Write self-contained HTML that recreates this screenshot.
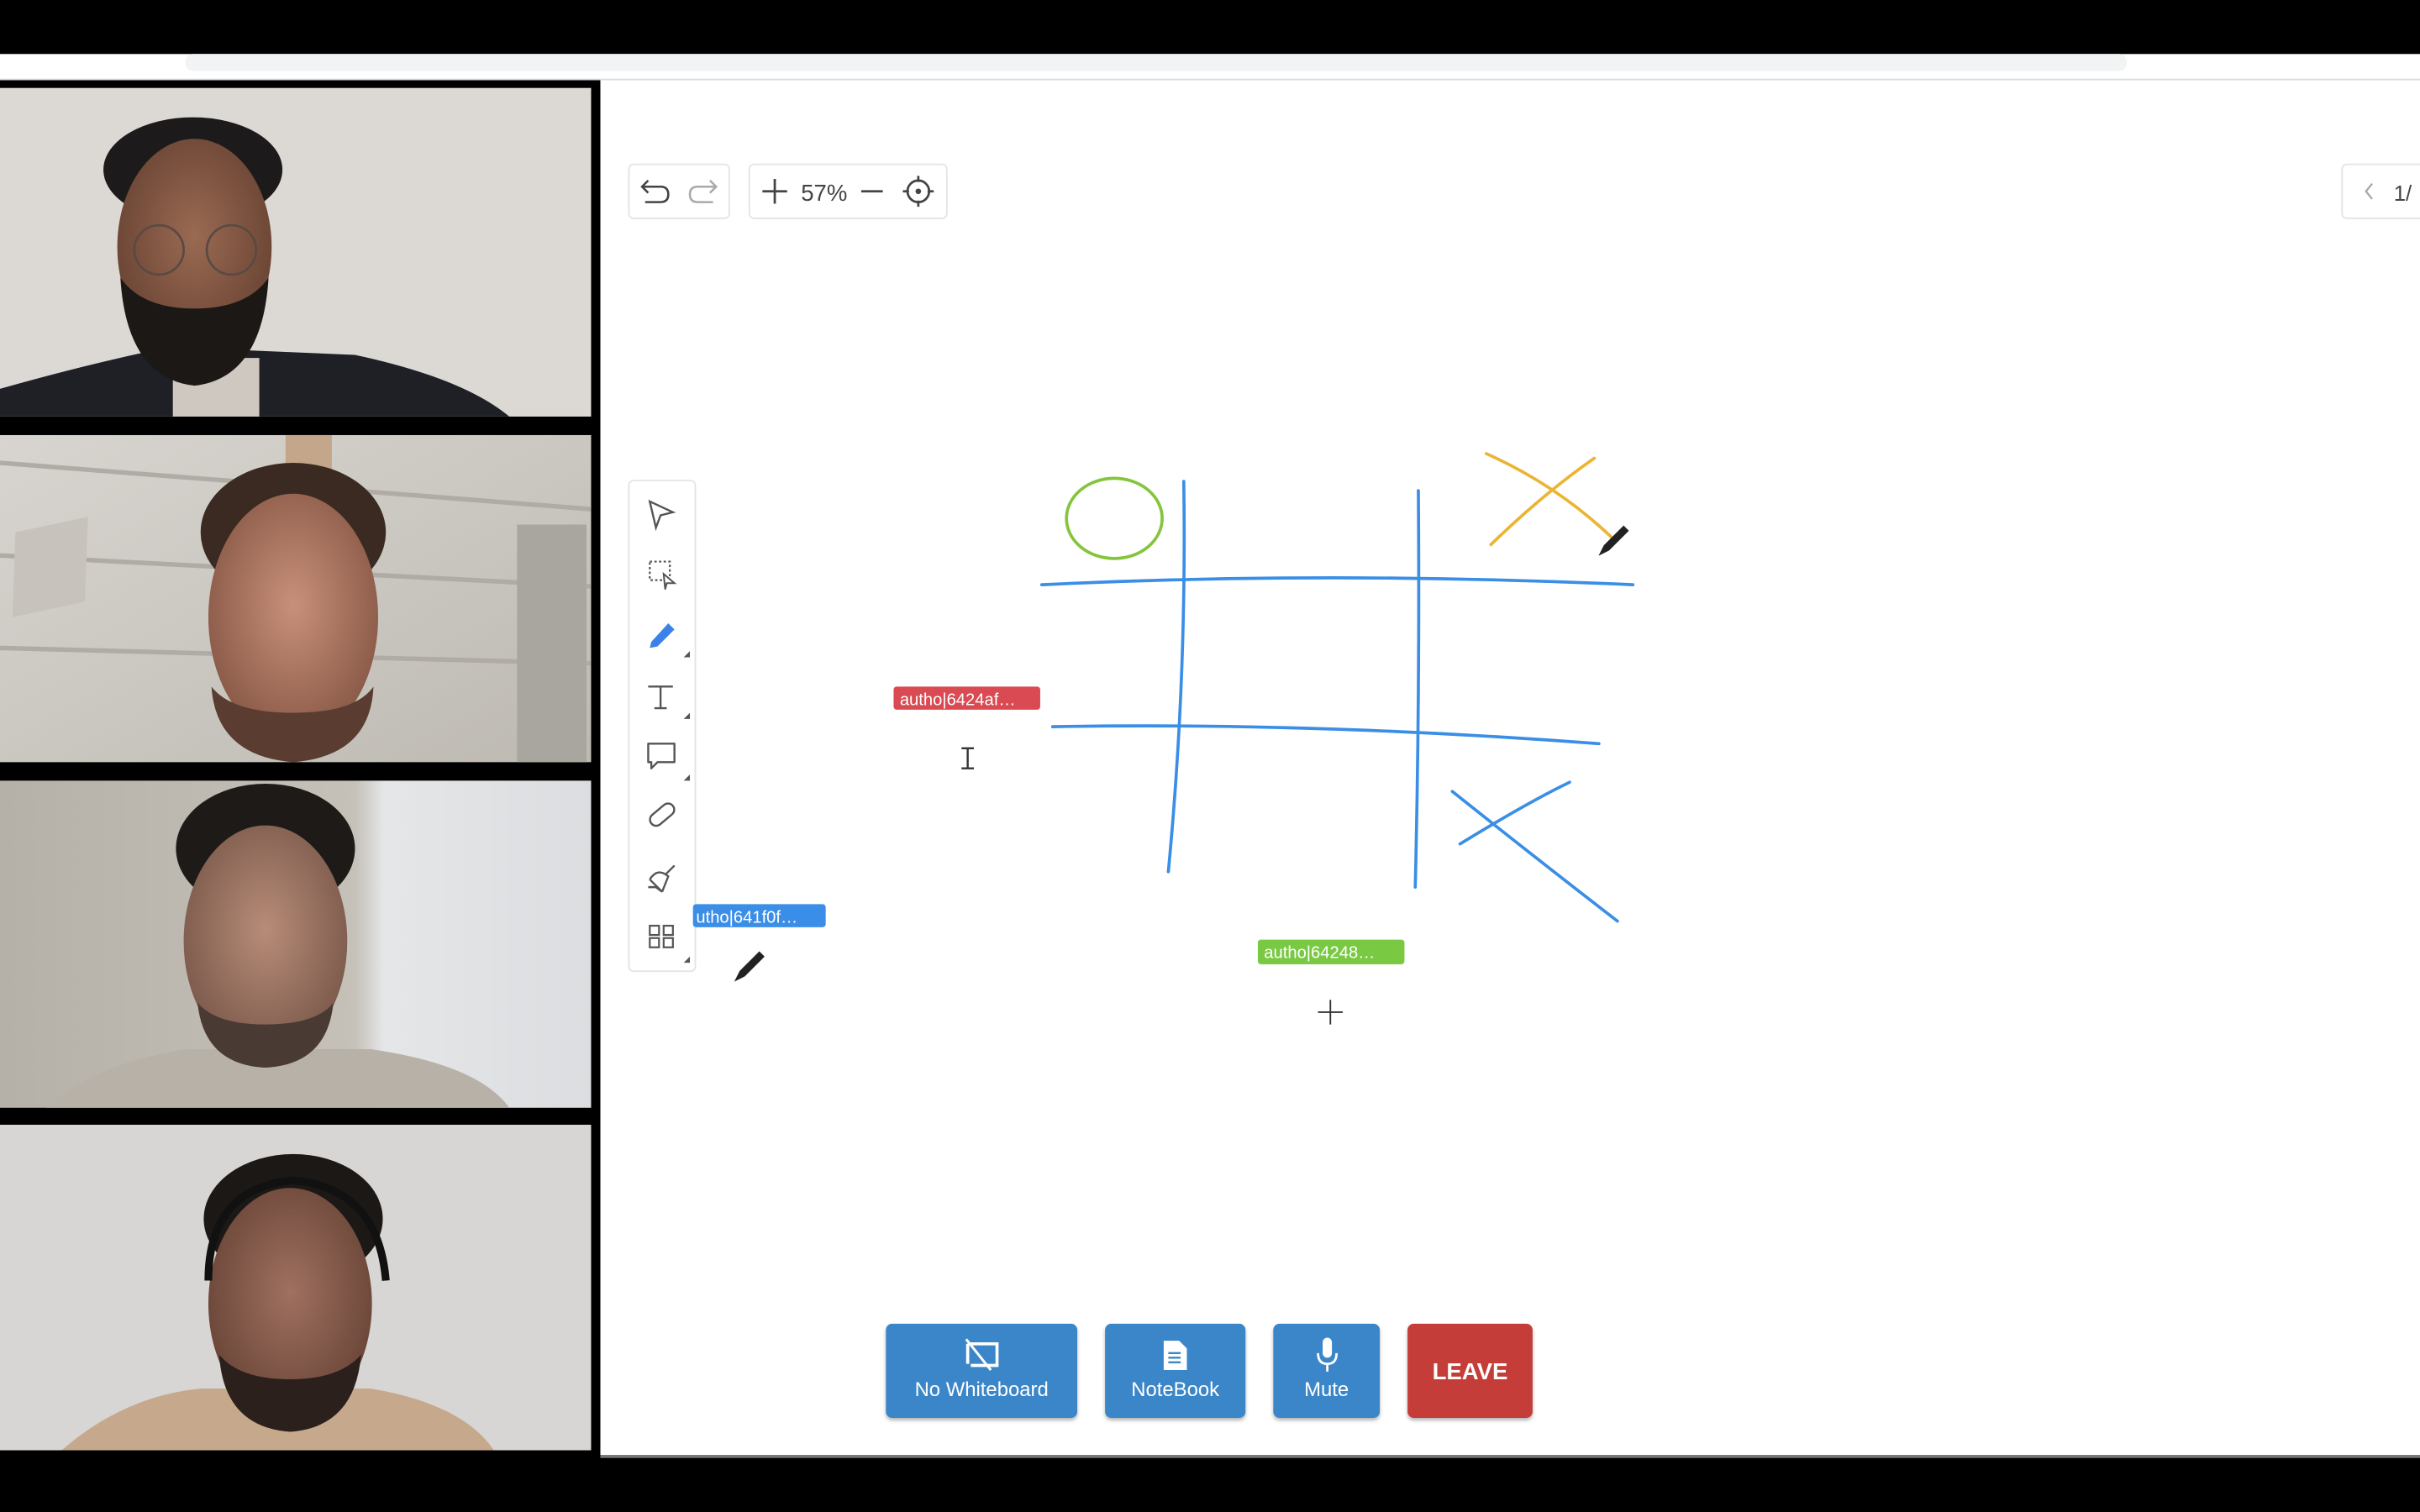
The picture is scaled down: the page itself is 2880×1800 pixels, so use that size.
<!DOCTYPE html>
<html><head><meta charset="utf-8"><style>
html,body{margin:0;padding:0;width:2880px;height:1800px;overflow:hidden;background:#000}
svg{display:block}
text{font-family:"Liberation Sans",sans-serif}
</style></head><body>
<svg width="2880" height="1800" viewBox="0 0 1568 980" xmlns="http://www.w3.org/2000/svg">
<defs>
<radialGradient id="sk1" cx="50%" cy="45%" r="55%"><stop offset="0" stop-color="#9a6a52"/><stop offset="1" stop-color="#6a4434"/></radialGradient>
<radialGradient id="sk2" cx="50%" cy="45%" r="55%"><stop offset="0" stop-color="#c8907a"/><stop offset="1" stop-color="#8a5a48"/></radialGradient>
<radialGradient id="sk3" cx="50%" cy="45%" r="55%"><stop offset="0" stop-color="#b88c78"/><stop offset="1" stop-color="#7c5a4c"/></radialGradient>
<radialGradient id="sk4" cx="50%" cy="45%" r="55%"><stop offset="0" stop-color="#a07060"/><stop offset="1" stop-color="#6a4638"/></radialGradient>
<linearGradient id="bg2" x1="0" y1="0" x2="1" y2="1"><stop offset="0" stop-color="#d8d5d0"/><stop offset="1" stop-color="#bdb9b2"/></linearGradient>
<linearGradient id="bg3" x1="0" y1="0" x2="1" y2="0"><stop offset="0" stop-color="#b5b0a8"/><stop offset=".6" stop-color="#c5c0b8"/><stop offset=".65" stop-color="#e5e6e8"/><stop offset="1" stop-color="#dcdde0"/></linearGradient>
<filter id="sh" x="-10%" y="-10%" width="120%" height="130%"><feDropShadow dx="0" dy="1.5" stdDeviation="1.2" flood-opacity="0.3"/></filter>
</defs>
<rect x="0" y="0" width="1568" height="35" fill="#000"/>
<rect x="0" y="35" width="1568" height="17" fill="#fff"/>
<rect x="120" y="35" width="1258" height="11" rx="5" fill="#f1f3f4"/>
<rect x="0" y="51" width="1568" height="1" fill="#dadce0"/>
<rect x="0" y="52" width="389" height="893" fill="#000"/>
<!-- tile 1 -->
<rect x="0" y="57" width="383" height="213" fill="#dcd9d5"/>
<path d="M0 270 L0 252 Q60 235 110 225 L230 230 Q300 245 330 270Z" fill="#1e2026"/>
<rect x="112" y="232" width="56" height="38" fill="#cfc8c0"/>
<ellipse cx="125" cy="110" rx="58" ry="34" fill="#1c1a1a"/>
<ellipse cx="126" cy="160" rx="50" ry="70" fill="url(#sk1)"/>
<path d="M78 180 Q82 245 126 250 Q170 245 174 180 Q160 200 126 200 Q92 200 78 180Z" fill="#1c1816"/>
<circle cx="103" cy="162" r="16" fill="none" stroke="#5a4a44" stroke-width="1.5"/>
<circle cx="150" cy="162" r="16" fill="none" stroke="#5a4a44" stroke-width="1.5"/>
<!-- tile 2 -->
<rect x="0" y="282" width="383" height="212" fill="url(#bg2)"/>
<path d="M0 300 L383 330 M0 360 L383 380 M0 420 L383 430" stroke="#b0aca5" stroke-width="3"/>
<rect x="185" y="282" width="30" height="70" fill="#c4a78a"/>
<rect x="335" y="340" width="45" height="154" fill="#a9a59f"/>
<polygon points="10,345 57,335 55,390 8,400" fill="#c8c2bc"/>
<ellipse cx="190" cy="345" rx="60" ry="45" fill="#3a2a22"/>
<ellipse cx="190" cy="400" rx="55" ry="80" fill="url(#sk2)"/>
<path d="M137 445 Q140 490 190 494 Q240 490 242 445 Q230 462 190 462 Q150 462 137 445Z" fill="#5a3c30"/>
<!-- tile 3 -->
<rect x="0" y="506" width="383" height="212" fill="url(#bg3)"/>
<path d="M30 718 Q60 690 120 680 L240 680 Q310 690 330 718Z" fill="#b7b1a8"/>
<ellipse cx="172" cy="550" rx="58" ry="42" fill="#1e1a18"/>
<ellipse cx="172" cy="610" rx="53" ry="75" fill="url(#sk3)"/>
<path d="M128 650 Q132 690 172 692 Q212 690 216 650 Q205 664 172 664 Q140 664 128 650Z" fill="#4a3a34"/>
<!-- tile 4 -->
<rect x="0" y="729" width="383" height="211" fill="#d7d6d4"/>
<path d="M40 940 Q80 905 130 900 L240 900 Q300 910 320 940Z" fill="#c6a98c"/>
<ellipse cx="190" cy="790" rx="58" ry="42" fill="#1c1816"/>
<ellipse cx="188" cy="845" rx="53" ry="75" fill="url(#sk4)"/>
<path d="M142 878 Q145 925 188 928 Q230 925 234 878 Q220 894 188 894 Q155 894 142 878Z" fill="#2c201c"/>
<path d="M135 830 Q135 770 190 765 Q245 770 250 830" fill="none" stroke="#111" stroke-width="5"/>
<!-- whiteboard -->
<rect x="389" y="52" width="1179" height="893" fill="#fff"/>
<rect x="389" y="943" width="1179" height="2" fill="#777"/>
<rect x="407.5" y="106.5" width="65" height="35" rx="3" fill="#fff" stroke="#e2e4e8"/>
<path d="M420 117 L416 121 L420 125 M416 121 H428 Q433 121 433 126 Q433 131 428 131 H418" fill="none" stroke="#444" stroke-width="1.4"/>
<path d="M460 117 L464 121 L460 125 M464 121 H452 Q447 121 447 126 Q447 131 452 131 H462" fill="none" stroke="#aaa" stroke-width="1.4"/>
<rect x="485.5" y="106.5" width="128" height="35" rx="3" fill="#fff" stroke="#e2e4e8"/>
<path d="M502 116 V132 M494 124 H510" stroke="#444" stroke-width="1.5"/>
<text x="534" y="130" font-size="15" fill="#444" text-anchor="middle">57%</text>
<path d="M558 124 H572" stroke="#444" stroke-width="1.5"/>
<circle cx="595" cy="124" r="7" fill="none" stroke="#444" stroke-width="1.5"/>
<circle cx="595" cy="124" r="1.8" fill="#444"/>
<path d="M595 114 V118 M595 130 V134 M585 124 H589 M601 124 H605" stroke="#444" stroke-width="1.5"/>
<rect x="1517.5" y="106.5" width="60" height="35" rx="3" fill="#fff" stroke="#e2e4e8"/>
<path d="M1537 119 L1533 124 L1537 129" fill="none" stroke="#aaa" stroke-width="1.3"/>
<text x="1551" y="130" font-size="14" fill="#444">1/</text>
<rect x="407.5" y="311.5" width="43" height="318" rx="3" fill="#fff" stroke="#e2e4e8"/>
<path d="M421 325 L436 332 L428 334 L425 342Z" fill="none" stroke="#555" stroke-width="1.3"/>
<rect x="421" y="364" width="13" height="12" fill="none" stroke="#555" stroke-width="1.2" stroke-dasharray="1.5 1.5"/>
<path d="M430 372 L437 378 L432 378 L431 382Z" fill="#fff" stroke="#555" stroke-width="1.1"/>
<path d="M422 416 L433 404 L437 408 L426 419 L421 420Z" fill="#3b82e8"/>
<path d="M420 445 H436 M428 445 V459 M424 459 H432" stroke="#555" stroke-width="1.3" fill="none"/>
<path d="M420 482 H437 V494 H426 L422 498 V494 H420Z" fill="none" stroke="#555" stroke-width="1.3" stroke-linejoin="round"/>
<rect x="420" y="524" width="18" height="8" rx="4" transform="rotate(-40 429 528)" fill="none" stroke="#555" stroke-width="1.3"/>
<path d="M421 570 L429 578 L425 575 L420 575 M421 570 Q426 562 433 568 L429 578 M431 567 L437 561" fill="none" stroke="#555" stroke-width="1.3"/>
<rect x="421" y="600" width="6" height="6" fill="none" stroke="#555" stroke-width="1.2"/>
<rect x="430" y="600" width="6" height="6" fill="none" stroke="#555" stroke-width="1.2"/>
<rect x="421" y="608" width="6" height="6" fill="none" stroke="#555" stroke-width="1.2"/>
<rect x="430" y="608" width="6" height="6" fill="none" stroke="#555" stroke-width="1.2"/>
<path d="M443 426 l4 -4 v4z M443 466 l4 -4 v4z M443 506 l4 -4 v4z M443 624 l4 -4 v4z" fill="#555"/>
<g fill="none" stroke-linecap="round">
<ellipse cx="722" cy="336" rx="31" ry="26" stroke="#84c53c" stroke-width="2"/>
<g stroke="#3a8ee6" stroke-width="2">
<path d="M767 312 Q769 440 757 565"/>
<path d="M919 318 Q920 450 917 575"/>
<path d="M675 379 Q860 370 1058 379"/>
<path d="M682 471 Q850 468 1036 482"/>
<path d="M941 513 Q1000 560 1048 597"/>
<path d="M946 547 Q990 520 1017 507"/>
</g>
<g stroke="#ebb434" stroke-width="2">
<path d="M963 294 Q1010 315 1046 350"/>
<path d="M966 353 Q1000 320 1033 297"/>
</g>
</g>
<path d="M1040 354 L1038 358 L1042 356 L1054 344 L1052 342Z" fill="#222" stroke="#222" stroke-width="2"/>
<path d="M480 630 L478 634 L482 632 L494 620 L492 618Z" fill="#222" stroke="#222" stroke-width="2"/>
<path d="M623 485 H631 M627 485 V498 M623 498 H631" stroke="#333" stroke-width="1.3"/>
<path d="M862 648 V664 M854 656 H870" stroke="#333" stroke-width="1"/>
<rect x="579" y="445" width="95" height="15" rx="2" fill="#d94a52"/>
<text x="583" y="457" font-size="11" fill="#fff">autho|6424af…</text>
<rect x="449" y="586" width="86" height="15" rx="2" fill="#3b8ee8"/>
<text x="451" y="598" font-size="11" fill="#fff">utho|641f0f…</text>
<rect x="815" y="609" width="95" height="16" rx="2" fill="#7ac943"/>
<text x="819" y="621" font-size="11" fill="#fff">autho|64248…</text>
<g filter="url(#sh)">
<rect x="574" y="858" width="124" height="61" rx="4" fill="#3a86c8"/>
<rect x="716" y="858" width="91" height="61" rx="4" fill="#3a86c8"/>
<rect x="825" y="858" width="69" height="61" rx="4" fill="#3a86c8"/>
<rect x="912" y="858" width="81" height="61" rx="4" fill="#c43c37"/>
</g>
<text x="636" y="905" font-size="13" fill="#fff" text-anchor="middle">No Whiteboard</text>
<text x="761.5" y="905" font-size="13" fill="#fff" text-anchor="middle">NoteBook</text>
<text x="859.5" y="905" font-size="13" fill="#fff" text-anchor="middle">Mute</text>
<text x="952.5" y="894" font-size="15" font-weight="bold" fill="#fff" text-anchor="middle">LEAVE</text>
<path d="M627 871 H646 V885 H629 M627 871 V884" fill="none" stroke="#fff" stroke-width="2"/>
<path d="M626 868 L642 888" stroke="#fff" stroke-width="1.6"/>
<path d="M754 869 H764 L769 874 V888 H754Z" fill="#fff"/>
<path d="M757 877 H765 M757 880 H765 M757 883 H765" stroke="#3a86c8" stroke-width="1.3"/>
<rect x="857" y="867" width="6" height="13" rx="3" fill="#fff"/>
<path d="M854 877 Q854 884 860 884 Q866 884 866 877 M860 884 V889" fill="none" stroke="#fff" stroke-width="1.5"/>
<rect x="0" y="945" width="1568" height="35" fill="#000"/>
</svg>
</body></html>
